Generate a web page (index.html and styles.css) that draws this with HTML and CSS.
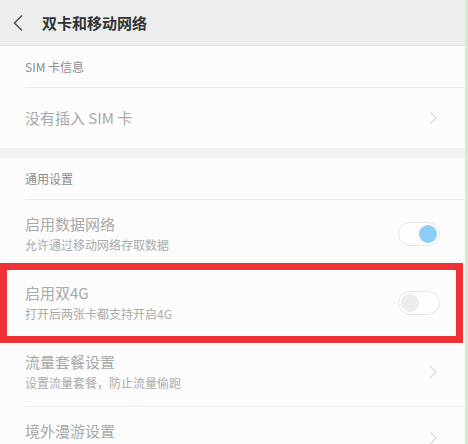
FILE: index.html
```html
<!DOCTYPE html>
<html lang="zh-CN">
<head>
    <meta charset="UTF-8">
    <meta name="viewport" content="width=device-width, initial-scale=1.0">
    <title>双卡和移动网络</title>
    <link rel="stylesheet" href="styles.css">
</head>
<body>

    <div class="screen">
        <div class="topbar">
            <svg class="back" width="12" height="18" viewBox="0 0 12 18">
                <polyline points="10,1.5 2.5,9 10,16.5" fill="none" stroke="#555" stroke-width="1.6"/>
            </svg>
            <span class="title">双卡和移动网络</span>
        </div>

        <div class="section-title">SIM 卡信息</div>
        <div class="row single">
            <div class="texts">
                <div class="name">没有插入 SIM 卡</div>
            </div>
            <svg class="arrow" width="8" height="14" viewBox="0 0 8 14">
                <polyline points="1,1 7,7 1,13" fill="none" stroke="#dcdedd" stroke-width="1.3"/>
            </svg>
        </div>

        <div class="gap"></div>

        <div class="section-title">通用设置</div>
        <div class="row">
            <div class="texts">
                <div class="name">启用数据网络</div>
                <div class="desc">允许通过移动网络存取数据</div>
            </div>
            <div class="switch on"><span class="knob"></span></div>
        </div>
        <div class="row">
            <div class="texts">
                <div class="name">启用双4G</div>
                <div class="desc">打开后两张卡都支持开启4G</div>
            </div>
            <div class="switch"><span class="knob"></span></div>
        </div>
        <div class="row">
            <div class="texts">
                <div class="name">流量套餐设置</div>
                <div class="desc">设置流量套餐，防止流量偷跑</div>
            </div>
            <svg class="arrow" width="8" height="14" viewBox="0 0 8 14">
                <polyline points="1,1 7,7 1,13" fill="none" stroke="#dcdedd" stroke-width="1.3"/>
            </svg>
        </div>
        <div class="row last">
            <div class="texts">
                <div class="name">境外漫游设置</div>
            </div>
            <svg class="arrow" width="8" height="14" viewBox="0 0 8 14">
                <polyline points="1,1 7,7 1,13" fill="none" stroke="#dcdedd" stroke-width="1.3"/>
            </svg>
        </div>

        <!-- 标注框 -->
        <div class="highlight"></div>
    </div>

</body>
</html>
```

FILE: styles.css
```css
body {
    margin: 0;
    padding: 0;
    background-color: #d6ead3;
    font-family: "Noto Sans CJK SC", "Noto Sans", sans-serif;
    overflow: hidden;
}
.screen {
    position: relative;
    width: 465px;
    height: 444px;
    background-color: #fbfcfb;
    overflow: hidden;
}
.topbar {
    height: 45px;
    background-color: #eceeed;
    border-bottom: 1px solid #dfe1e0;
    display: flex;
    align-items: center;
    padding-left: 12px;
}
.back {
    margin-right: 18px;
}
.title {
    font-size: 15px;
    font-weight: 700;
    color: #333;
}
.section-title {
    height: 41px;
    margin-left: 25px;
    display: flex;
    align-items: center;
    font-size: 12px;
    color: #8c8c8c;
    border-bottom: 1px solid #eaecea;
}
.row {
    height: 68px;
    margin-left: 25px;
    padding-right: 25px;
    display: flex;
    align-items: center;
    justify-content: space-between;
    border-bottom: 1px solid #eceeec;
}
.row.single {
    height: 60px;
    border-bottom: none;
}
.row.last {
    height: 37px;
    align-items: flex-start;
    padding-top: 14px;
    border-bottom: none;
}
.row.last .arrow {
    margin-top: 10px;
}
.name {
    font-size: 15px;
    color: #a9a9a9;
    line-height: 20px;
}
.desc {
    font-size: 12px;
    color: #ababab;
    line-height: 18px;
    margin-top: 2px;
}
.arrow {
    margin-right: 3px;
}
.gap {
    height: 10px;
    background-color: #f1f3f2;
}
.switch {
    width: 42px;
    height: 24px;
    box-sizing: border-box;
    border: 1px solid #e6e8e7;
    border-radius: 12px;
    background-color: #fdfdfd;
    display: flex;
    align-items: center;
    padding: 0 2px;
}
.knob {
    width: 18px;
    height: 18px;
    border-radius: 50%;
    background-color: #ececec;
}
.switch.on {
    justify-content: flex-end;
}
.switch.on .knob {
    background-color: #8ccdf6;
}
.highlight {
    position: absolute;
    left: 0;
    top: 263px;
    width: 463px;
    height: 80px;
    box-sizing: border-box;
    border: 7px solid #ef3138;
}
```
